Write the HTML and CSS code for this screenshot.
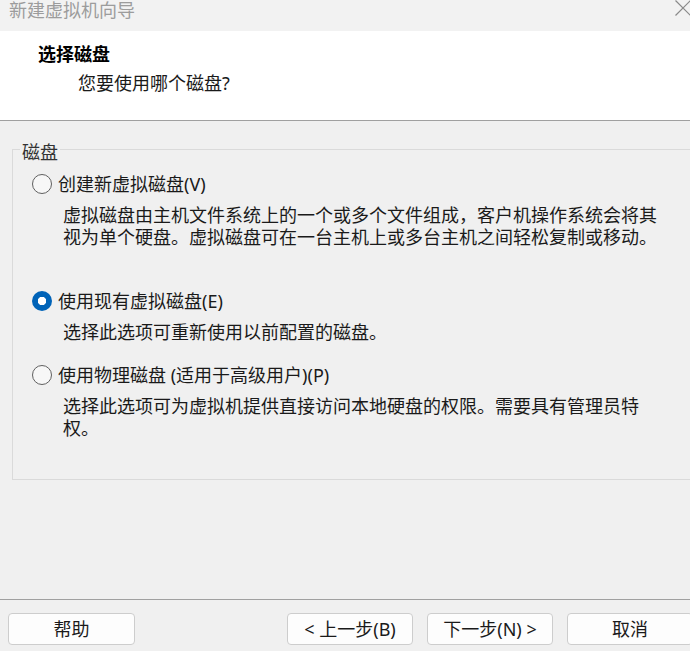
FILE: index.html
```html
<!DOCTYPE html>
<html lang="zh-CN">
<head>
<meta charset="utf-8">
<title>新建虚拟机向导</title>
<link rel="stylesheet" href="styles.css">
</head>
<body>
<div class="window">
  <div class="titlebar">
    <span class="title">新建虚拟机向导</span>
    <svg class="close" width="16" height="16" viewBox="0 0 16 16"><path d="M0.5 0.5 L15.5 15.5 M15.5 0.5 L0.5 15.5" stroke="#8a8a8a" stroke-width="1.2" fill="none"/></svg>
  </div>
  <div class="header">
    <div class="h-title">选择磁盘</div>
    <div class="h-sub">您要使用哪个磁盘?</div>
  </div>
  <div class="content">
    <fieldset class="group">
      <legend class="legend">磁盘</legend>
      <div class="option">
        <span class="radio"></span>
        <span class="opt-label">创建新虚拟磁盘(V)</span>
      </div>
      <div class="desc">虚拟磁盘由主机文件系统上的一个或多个文件组成，客户机操作系统会将其<br>视为单个硬盘。虚拟磁盘可在一台主机上或多台主机之间轻松复制或移动。</div>
      <div class="option opt-gap1">
        <span class="radio checked"></span>
        <span class="opt-label">使用现有虚拟磁盘(E)</span>
      </div>
      <div class="desc">选择此选项可重新使用以前配置的磁盘。</div>
      <div class="option opt-gap2">
        <span class="radio"></span>
        <span class="opt-label">使用物理磁盘 (适用于高级用户)(P)</span>
      </div>
      <div class="desc">选择此选项可为虚拟机提供直接访问本地硬盘的权限。需要具有管理员特<br>权。</div>
    </fieldset>
  </div>
  <div class="footer">
    <button class="btn btn-help">帮助</button>
    <button class="btn">&lt; 上一步(B)</button>
    <button class="btn">下一步(N) &gt;</button>
    <button class="btn">取消</button>
  </div>
</div>
</body>
</html>
```
FILE: styles.css
```css
html, body {
  margin: 0;
  padding: 0;
}
body {
  width: 690px;
  height: 651px;
  overflow: hidden;
  background: #f0f0f0;
  font-family: "Noto Sans", "Noto Sans CJK SC", sans-serif;
  color: #1a1a1a;
}
.window {
  display: flex;
  flex-direction: column;
  width: 690px;
  height: 651px;
}
.titlebar {
  height: 31px;
  background: #f2f2f2;
  display: flex;
  justify-content: space-between;
  align-items: flex-start;
  padding-left: 9px;
  box-sizing: border-box;
  flex: none;
}
.title {
  font-size: 18px;
  line-height: 20px;
  color: #9c9c9c;
}
.close {
  margin-top: 0;
  margin-right: -1px;
}
.header {
  height: 90px;
  box-sizing: border-box;
  background: #fff;
  border-bottom: 1px solid #a0a0a0;
  flex: none;
  padding-top: 14px;
}
.h-title {
  font-size: 18px;
  line-height: 18px;
  font-weight: bold;
  color: #000;
  padding-left: 38px;
}
.h-sub {
  font-size: 18px;
  line-height: 18px;
  color: #1a1a1a;
  padding-left: 78px;
  margin-top: 11px;
}
.content {
  flex: 1;
  padding-top: 16px;
}
.group {
  margin: 0 -20px 0 12px;
  padding: 0 0 40px 0;
  border: 1px solid #dadada;
  min-width: 0;
}
.legend {
  font-size: 18px;
  line-height: 18px;
  padding: 6px 2px 0 2px;
  margin-left: 7px;
  height: 24px;
  box-sizing: border-box;
  color: #333;
}
.option {
  display: flex;
  align-items: center;
  height: 24px;
  padding-left: 19px;
  margin-top: 11px;
}
.opt-gap1 {
  margin-top: 41px;
}
.opt-gap2 {
  margin-top: 20px;
}
.radio {
  width: 20px;
  height: 20px;
  box-sizing: border-box;
  border: 1.5px solid #606060;
  border-radius: 50%;
  background: #f7f7f7;
  flex: none;
  margin-right: 6px;
}
.radio.checked {
  border: none;
  background: radial-gradient(circle, #ffffff 0 4px, #0063b8 4.5px);
}
.opt-label {
  font-size: 18px;
  line-height: 24px;
  color: #1a1a1a;
  white-space: nowrap;
}
.desc {
  font-size: 18px;
  line-height: 22px;
  padding-left: 50px;
  margin-top: 8px;
  white-space: nowrap;
  color: #1a1a1a;
}
.footer {
  flex: none;
  height: 52px;
  box-sizing: border-box;
  border-top: 1px solid #a0a0a0;
  display: flex;
  gap: 14px;
  padding: 13px 0 0 8px;
  overflow: hidden;
}
.btn {
  flex: none;
  width: 126px;
  height: 32px;
  box-sizing: border-box;
  border: 1px solid #cdcdcd;
  border-radius: 4px;
  background: #fdfdfd;
  font-family: "Noto Sans", "Noto Sans CJK SC", sans-serif;
  font-size: 18px;
  line-height: 20px;
  color: #1a1a1a;
  padding: 0;
}
.btn-help {
  width: 127px;
  margin-right: 138px;
}
```
